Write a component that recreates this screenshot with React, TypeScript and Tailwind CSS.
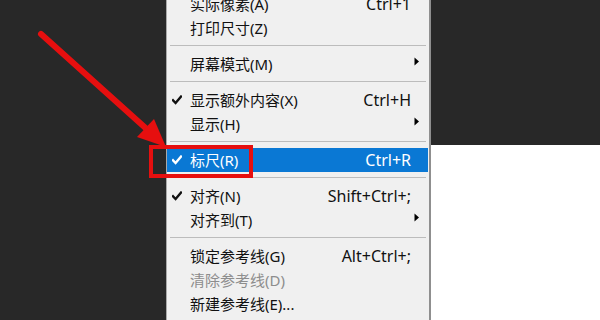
import React from 'react';

type Item =
  | { sep: true }
  | {
      sep?: false;
      label: string;
      shortcut?: string;
      checked?: boolean;
      sub?: boolean;
      active?: boolean;
      disabled?: boolean;
    };

const items: Item[] = [
  { label: '实际像素(A)', shortcut: 'Ctrl+1' },
  { label: '打印尺寸(Z)' },
  { sep: true },
  { label: '屏幕模式(M)', sub: true },
  { sep: true },
  { label: '显示额外内容(X)', shortcut: 'Ctrl+H', checked: true },
  { label: '显示(H)', sub: true },
  { sep: true },
  { label: '标尺(R)', shortcut: 'Ctrl+R', checked: true, active: true },
  { sep: true },
  { label: '对齐(N)', shortcut: 'Shift+Ctrl+;', checked: true },
  { label: '对齐到(T)', sub: true },
  { sep: true },
  { label: '锁定参考线(G)', shortcut: 'Alt+Ctrl+;' },
  { label: '清除参考线(D)', disabled: true },
  { label: '新建参考线(E)...' },
];

function Check({ color }: { color: string }) {
  return (
    <svg width="10" height="10" viewBox="0 0 10 10" className="block">
      <path d="M1 5.2 L3.6 8 L9 1.6" fill="none" stroke={color} strokeWidth="2.4" strokeLinecap="square" />
    </svg>
  );
}

function Arrow() {
  return (
    <svg width="6" height="9" viewBox="0 0 6 9" className="block">
      <path d="M0.5 0.5 L5 4.5 L0.5 8.5 Z" fill="#000" />
    </svg>
  );
}

export default function App() {
  return (
    <div
      className="relative w-[600px] h-[320px] overflow-hidden flex bg-[#282828]"
      style={{ fontFamily: '"Noto Sans", "Noto Sans CJK SC", sans-serif' }}
    >
      <div className="w-[166px] h-full bg-[#282828]" />
      <div className="w-[265px] h-full overflow-hidden bg-[#f0f0f0] border-l border-[#a9a9a9] border-r-2 border-r-[#8f8f8f]">
        <div className="-mt-[8px] flex flex-col pr-px">
          {items.map((it, i) =>
            it.sep ? (
              <div key={i} className="h-[12px] pt-[5px] pl-[3px] pr-[2px]">
                <div className="h-px bg-[#bcbcbc]" />
              </div>
            ) : (
              <div
                key={i}
                className={
                  'h-[24px] flex items-center text-[15px] leading-[24px] ' +
                  (it.active ? 'bg-[#0a78d4] text-white' : it.disabled ? 'text-[#8d8d8d]' : 'text-[#111]')
                }
              >
                <div className="w-[23px] flex justify-end pr-[8px]">
                  {it.checked && <Check color={it.active ? '#fff' : '#111'} />}
                </div>
                <div className="flex-1 whitespace-nowrap">{it.label}</div>
                <div className="whitespace-nowrap pr-[17px] text-[16px]">{it.shortcut ?? ''}</div>
                <div className="w-[0px] relative">
                  {it.sub && (
                    <div className="absolute -left-[14px] -top-[7px]">
                      <Arrow />
                    </div>
                  )}
                </div>
              </div>
            )
          )}
        </div>
      </div>
      <div className="flex-1 h-full flex flex-col">
        <div className="h-[145px] bg-[#282828]" />
        <div className="flex-1 bg-white" />
      </div>

      {/* Red annotation */}
      <div className="absolute left-[149px] top-[145px] w-[104px] h-[33px] border-[4px] border-[#e60f0f]" />
      <svg className="absolute inset-0 pointer-events-none" width="600" height="320">
        <line x1="41" y1="34" x2="150" y2="132" stroke="#e60f0f" strokeWidth="6" strokeLinecap="round" />
        <polygon points="166,147 137,137 154,119" fill="#e60f0f" />
      </svg>
    </div>
  );
}
